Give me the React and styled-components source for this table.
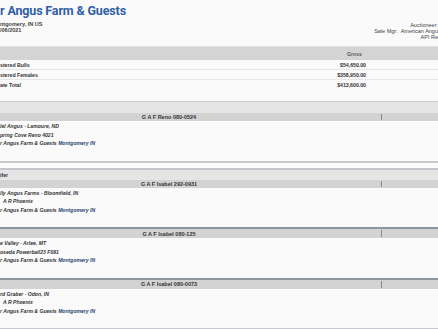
import React from "react";
import styled, { createGlobalStyle } from "styled-components";

const GlobalStyle = createGlobalStyle`
  html, body {
    margin: 0;
    padding: 0;
    background: #fafafa;
    overflow: hidden;
  }
  body {
    font-family: "Liberation Sans", Arial, sans-serif;
    color: #333;
  }
`;

const Page = styled.div`
  width: 438px;
  height: 329px;
  overflow: hidden;
`;

const Header = styled.header`
  display: flex;
  justify-content: space-between;
  align-items: flex-start;
  height: 46px;
  padding-top: 3px;
  box-sizing: border-box;
`;

const TitleBlock = styled.div`
  display: flex;
  flex-direction: column;
`;

const Title = styled.h1`
  margin: 0;
  font-family: Roboto, "Liberation Sans", sans-serif;
  font-weight: 700;
  font-size: 12.5px;
  line-height: 16px;
  letter-spacing: -0.15px;
  color: #2f5fa6;
  white-space: nowrap;
`;

const SmallLine = styled.div`
  font-size: 5.5px;
  line-height: 6px;
  font-weight: 700;
  color: #444;
  white-space: nowrap;
`;

const Meta = styled.div`
  display: flex;
  flex-direction: column;
  align-items: flex-end;
  padding-top: 19px;
  font-size: 5.5px;
  line-height: 6.2px;
  color: #444;
  white-space: nowrap;
`;

const MetaLine = styled.div`
  display: flex;
  gap: 3px;
`;

const Summary = styled.div`
  border-top: 1px solid #e2e2e2;
  margin-bottom: 11px;
`;

const SumRow = styled.div`
  display: grid;
  grid-template-columns: 1fr 60px 70px;
  height: ${(p) => (p.$head ? 13 : 10)}px;
  align-items: center;
  background: ${(p) => (p.$head ? "#d4d4d4" : "transparent")};
  border-bottom: ${(p) => (p.$last || p.$head ? "none" : "1px solid #e6e6e6")};
  box-sizing: border-box;
  font-size: 5.2px;
  font-weight: 700;
  color: #333;
`;

const SumLabel = styled.div`
  white-space: nowrap;
`;

const SumValue = styled.div`
  text-align: right;
  padding-right: ${(p) => (p.$head ? 6 : 2)}px;
  white-space: nowrap;
  color: ${(p) => (p.$head ? "#555" : "#333")};
`;

const Section = styled.section`
  border-top: ${(p) => (p.$first ? "1px solid #cacaca" : "2px solid #c3c6ca")};
  border-bottom: 2px solid #c6c9cd;
  margin-bottom: 5px;
`;

const SectionHead = styled.div`
  height: ${(p) => (p.$tall ? 11 : 10)}px;
  background: #e5e5e5;
  font-size: 5.2px;
  font-weight: 700;
  line-height: ${(p) => (p.$tall ? 11 : 10)}px;
  color: #333;
  white-space: nowrap;
`;

const Lot = styled.div`
  border-top: ${(p) => (p.$first ? "none" : "2px solid #8e959d")};
`;

const LotBar = styled.div`
  display: grid;
  grid-template-columns: 382px 1fr;
  height: ${(p) => p.$h}px;
  background: #d3d3d3;
  align-items: stretch;
`;

const LotName = styled.div`
  padding-right: 43px;
  font-size: 5.5px;
  font-weight: 700;
  color: #333;
  display: flex;
  align-items: center;
  justify-content: center;
  white-space: nowrap;
  border-right: 1px solid #8a8a8a;
  margin: 1px 0;
`;

const LotBody = styled.div`
  padding: 1px 0 ${(p) => p.$pb}px;
`;

const LotLine = styled.div`
  font-size: 5.1px;
  line-height: 8.5px;
  font-style: italic;
  font-weight: 700;
  color: #333;
  white-space: nowrap;
  padding-left: ${(p) => p.$lead || 0}px;
`;

const Place = styled.span`
  color: #2a4474;
`;

const lots = {
  bull: [
    {
      name: "G A F Reno 080-0524",
      breeder: "lel Angus - Lamoure, ND",
      sire: "pring Cove Reno 4021",
      sireLead: 0,
    },
  ],
  heifer: [
    {
      name: "G A F Isabel 292-0931",
      breeder: "lly Angus Farms - Bloomfield, IN",
      sire: "A R Phoenix",
      sireLead: 3,
    },
    {
      name: "G A F Isabel 080-125",
      breeder: "e Valley - Arlee, MT",
      sire: "oseda Powerball23 F091",
      sireLead: 0,
    },
    {
      name: "G A F Isabel 080-0073",
      breeder: "rd Graber - Odon, IN",
      sire: "A R Phoenix",
      sireLead: 3,
    },
  ],
};

function LotBlock({ lot, first, barH, pb }) {
  return (
    <Lot $first={first}>
      <LotBar $h={barH}>
        <LotName>{lot.name}</LotName>
        <div />
      </LotBar>
      <LotBody $pb={pb}>
        <LotLine>{lot.breeder}</LotLine>
        <LotLine $lead={lot.sireLead}>{lot.sire}</LotLine>
        <LotLine>
          r Angus Farm &amp; Guests <Place>Montgomery IN</Place>
        </LotLine>
      </LotBody>
    </Lot>
  );
}

export default function App() {
  return (
    <Page>
      <GlobalStyle />
      <Header>
        <TitleBlock>
          <Title>r Angus Farm &amp; Guests</Title>
          <SmallLine style={{ marginTop: 2 }}>ntgomery, IN US</SmallLine>
          <SmallLine>/06/2021</SmallLine>
        </TitleBlock>
        <Meta>
          <MetaLine>Auctioneer:</MetaLine>
          <MetaLine>
            <span>Sale Mgr:</span>
            <span>American Angu</span>
          </MetaLine>
          <MetaLine>API Re</MetaLine>
        </Meta>
      </Header>

      <Summary>
        <SumRow $head>
          <SumLabel />
          <SumValue $head>Gross</SumValue>
          <div />
        </SumRow>
        <SumRow>
          <SumLabel>stered Bulls</SumLabel>
          <SumValue>$54,650.00</SumValue>
          <div />
        </SumRow>
        <SumRow>
          <SumLabel>stered Females</SumLabel>
          <SumValue>$358,950.00</SumValue>
          <div />
        </SumRow>
        <SumRow $last>
          <SumLabel>ate Total</SumLabel>
          <SumValue>$413,600.00</SumValue>
          <div />
        </SumRow>
      </Summary>

      <Section $first>
        <SectionHead $tall />
        {lots.bull.map((lot, i) => (
          <LotBlock key={lot.name} lot={lot} first={i === 0} barH={8} pb={13} />
        ))}
      </Section>

      <Section>
        <SectionHead>ifer</SectionHead>
        {lots.heifer.map((lot, i) => (
          <LotBlock key={lot.name} lot={lot} first={i === 0} barH={i === 0 ? 8 : 9} pb={13} />
        ))}
      </Section>
    </Page>
  );
}
